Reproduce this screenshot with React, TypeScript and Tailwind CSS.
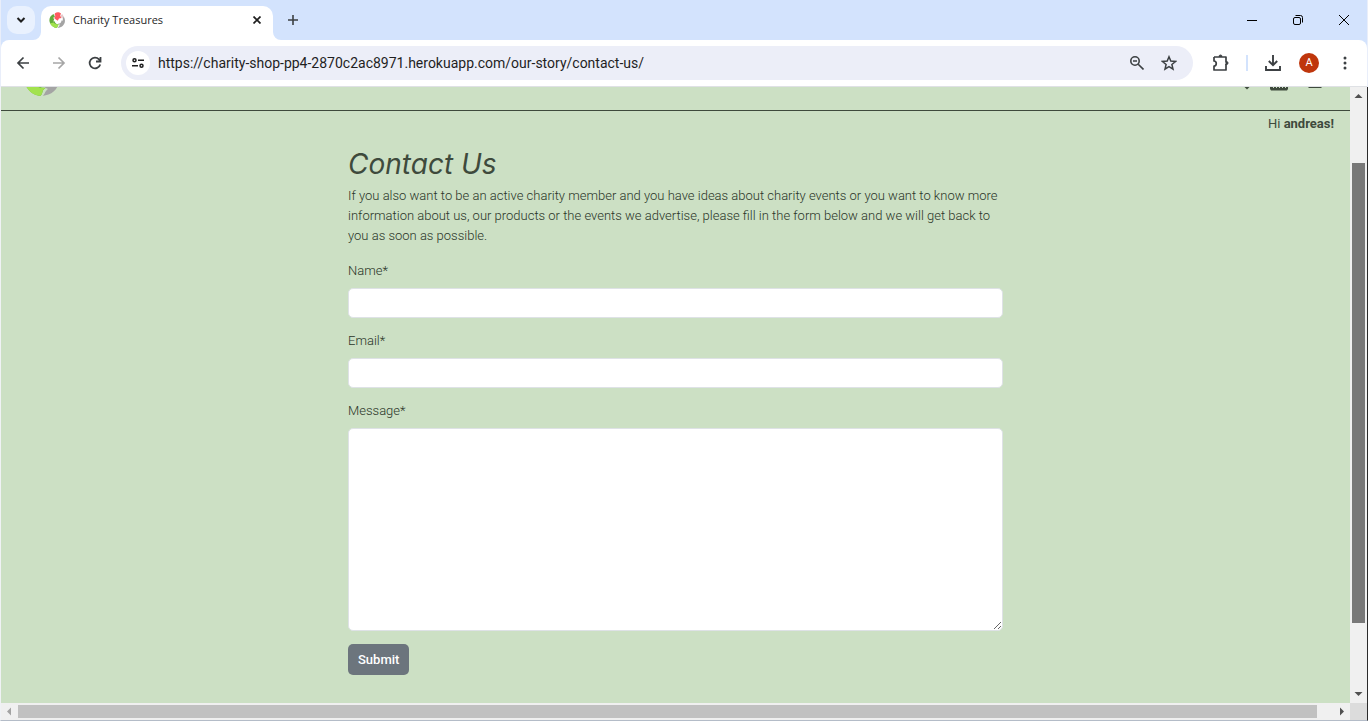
import React from "react";

const ico = "fill-none stroke-[#3c4043]";

function Logo({ className }: { className: string }) {
  return (
    <svg viewBox="0 0 40 40" className={className} aria-hidden="true">
      <path d="M11 5C3 9-1 18 2 26c3 8 10 13 17 14 4-3 1-6 6-9-7 0-10-3-11-8l-3 1 2-7-3-2 5-4z" fill="#63ab3b" />
      <path d="M3 28c3 7 9 11 16 12 4-3 1-6 6-9-8 0-12-2-13-5z" fill="#a2e24e" />
      <path d="M15 3c5-4 11-3 15 1l-2 5 3 6-6 1-3 6-5-3-4-4 3-5-2-4z" fill="#ff5a5f" />
      <path d="M36 10c6 9 5 19-2 25-3 3-8 4-12 5 3-3 2-5 6-8-2 0-5-2-5-4 5 2 8-2 8-7l3 1 1-6z" fill="#a4a4a4" />
      <path d="M33 5l3 5-2 7-3-2-2-6z" fill="#e6c9cb" />
    </svg>
  );
}

function TabStrip() {
  return (
    <div className="flex h-10 shrink-0 border-x border-[#e9eefa] bg-[#d3e3fd]">
      <button aria-label="Search tabs" className="mt-1.5 ml-1.5 flex h-7 w-7 items-center justify-center rounded-[10px] bg-[#e9f1fe]">
        <svg width="10" height="8" viewBox="0 0 10 8" className="fill-none stroke-[#1f1f1f] stroke-2"><path d="M1.500 2L5 5.500 8.500 2" /></svg>
      </button>
      <svg width="8" height="8" viewBox="0 0 8 8" className="-ml-0.5 self-end fill-white"><path d="M8 0v8H0a8 8 0 0 0 8-8z" /></svg>
      <div className="mt-1.5 flex w-58 items-center rounded-t-[10px] bg-white px-2 pb-1.5">
        <Logo className="h-4 w-4" />
        <span className="ml-2 flex-1 font-['Open_Sans',sans-serif] text-[11px] text-[#1f1f1f]">Charity Treasures</span>
        <button aria-label="Close tab" className="flex h-4 w-4 items-center justify-center">
          <svg width="8" height="8" viewBox="0 0 8 8" className="fill-none stroke-[#1f1f1f] stroke-[1.7]"><path d="M.5.5l7 7M7.500.5l-7 7" /></svg>
        </button>
      </div>
      <svg width="8" height="8" viewBox="0 0 8 8" className="self-end fill-white"><path d="M0 0v8h8a8 8 0 0 1-8-8z" /></svg>
      <button aria-label="New tab" className="flex h-10 w-6 items-center justify-center">
        <svg width="10" height="10" viewBox="0 0 10 10" className="fill-none stroke-[#3c4043] stroke-[1.600]"><path d="M5 0v10M0 5h10" /></svg>
      </button>
      <div className="ml-auto flex items-center">
        <button aria-label="Minimize" className="flex h-10 w-[46px] items-center justify-center">
          <svg width="10" height="10" viewBox="0 0 10 10" className="fill-none stroke-black"><path d="M0 5.500h10" /></svg>
        </button>
        <button aria-label="Restore" className="flex h-10 w-[46px] items-center justify-center">
          <svg width="10" height="10" viewBox="0 0 10 10" className="fill-none stroke-black"><rect x=".5" y="2.500" width="7" height="7" rx="1.500" /><path d="M2.500.5H7.500a2 2 0 0 1 2 2v5" /></svg>
        </button>
        <button aria-label="Close" className="flex h-10 w-[46px] items-center justify-center">
          <svg width="10" height="10" viewBox="0 0 10 10" className="fill-none stroke-black"><path d="M0 0l10 10M10 0L0 10" /></svg>
        </button>
      </div>
    </div>
  );
}

function Toolbar() {
  return (
    <div className="flex h-[47px] shrink-0 items-center border-x border-[#e9eefa] bg-[#d3e3fd]">
      <div className="flex h-full flex-1 items-center rounded-t-lg border-b border-[#dfe1e5] bg-white pr-3 pl-3">
        <button aria-label="Back" className="flex h-6 w-5 items-center justify-center">
          <svg width="14" height="14" viewBox="0 0 14 14" className={ico + " stroke-[1.700]"}><path d="M13 7H2M7.500 1.500L2 7l5.500 5.500" /></svg>
        </button>
        <button aria-label="Forward" className="ml-4 flex h-6 w-5 items-center justify-center">
          <svg width="14" height="14" viewBox="0 0 14 14" className="fill-none stroke-[#a6a6a6] stroke-[1.700]"><path d="M1 7h11M6.500 1.500L12 7l-5.500 5.500" /></svg>
        </button>
        <button aria-label="Reload" className="ml-4 flex h-6 w-5 items-center justify-center">
          <svg width="14" height="14" viewBox="0 0 14 14" className={ico + " stroke-[1.800]"}><path d="M12.200 8.500A5.400 5.400 0 1 1 11 3.300L12.300 5M12.500 1v4.500H8" /></svg>
        </button>
        <div className="ml-4 flex h-[34px] flex-1 items-center rounded-full bg-[#eceef8] px-[5px]">
          <button aria-label="Site information" className="flex h-6 w-6 items-center justify-center rounded-full bg-white">
            <svg width="12" height="10" viewBox="0 0 12 10" className="fill-none stroke-[#1f1f1f] stroke-[1.500]"><circle cx="2.500" cy="2.300" r="1.500" /><path d="M6 2.300h6M0 7.700h6" /><circle cx="9.500" cy="7.700" r="1.500" /></svg>
          </button>
          <input aria-label="Address" defaultValue="https://charity-shop-pp4-2870c2ac8971.herokuapp.com/our-story/contact-us/" className="ml-2 min-w-0 flex-1 bg-transparent font-[Roboto,sans-serif] text-[14px] text-[#1f1f1f] outline-none" />
          <button aria-label="Zoom" className="flex h-6 w-8 items-center justify-center">
            <svg width="14" height="14" viewBox="0 0 14 14" className={ico + " stroke-[1.600]"}><circle cx="5" cy="5" r="4.200" /><path d="M8.200 8.200l5.300 5.300M3 5h4" /></svg>
          </button>
          <button aria-label="Bookmark this page" className="mr-[3px] flex h-6 w-8 items-center justify-center">
            <svg width="16" height="16" viewBox="0 0 16 16" className={ico + " stroke-[1.500]"}><path d="M8 1.800l1.800 4.300 4.700.4-3.600 3 1.100 4.600L8 11.600l-4 2.500 1.100-4.600-3.600-3 4.700-.4z" /></svg>
          </button>
        </div>
        <button aria-label="Extensions" className="ml-4 flex h-6 w-6 items-center justify-center">
          <svg width="18" height="18" viewBox="0 0 18 18" className={ico + " stroke-[1.700]"}><path d="M2 3h12v5.200M14 10v6H2v-4c3 0 3-5 0-5V3" strokeLinejoin="round" /><path d="M7 2.500a1.500 1.500 0 0 1 3 0zM14.500 7.500a1.500 1.500 0 0 1 0 3zM14 8v3" className="fill-[#3c4043] stroke-[1]" /></svg>
        </button>
        <span className="mx-[13px] h-4 w-0.5 bg-[#d3e3fd]" />
        <button aria-label="Downloads" className="flex h-6 w-6 items-center justify-center">
          <svg width="16" height="16" viewBox="0 0 16 16" className={ico + " stroke-[1.900]"}><path d="M8 0v10M3.800 6L8 10.200 12.200 6M1 11v4h14v-4" /></svg>
        </button>
        <button aria-label="Profile" className="ml-3.5 flex h-5 w-5 items-center justify-center rounded-full bg-[#bf360c] font-[Roboto,sans-serif] text-[11px] leading-5 text-white">A</button>
        <button aria-label="Menu" className="ml-4 flex h-6 w-5 items-center justify-center">
          <svg width="4" height="14" viewBox="0 0 4 14" className="fill-[#3c4043]"><circle cx="2" cy="2" r="1.500" /><circle cx="2" cy="7" r="1.500" /><circle cx="2" cy="12" r="1.500" /></svg>
        </button>
      </div>
    </div>
  );
}

function SiteHeader() {
  return (
    <header className="flex h-6 items-start justify-between border-b border-[#3e4a3c] pr-7 pl-[22px]">
      <div className="flex h-[9px] items-end overflow-hidden">
        <Logo className="h-9 w-9 shrink-0" />
      </div>
      <nav className="flex items-start gap-5">
        <svg width="6" height="3" viewBox="0 0 6 3" className="fill-[#3e4a3c]"><path d="M.5 0h5L3 2.500z" /></svg>
        <svg width="18" height="4" viewBox="0 0 18 4" className="fill-[#3e4a3c]"><path d="M0 0h18v2l-1 1.500H1L0 2z" /><path d="M3 0h1v1H3zM6 0h1v1H6zM9 0h1v1H9zM12 0h1v1h-1zM15 0h1v1h-1z" className="fill-[#cce0c4]" /></svg>
        <svg width="14" height="2" viewBox="0 0 14 2" className="fill-[#3e4a3c]"><path d="M0 0h14l-1 1H1z" /></svg>
      </nav>
    </header>
  );
}

function ContactForm() {
  const label = "block text-[13px] leading-5 font-light text-[#2a3528]";
  const field = "mt-[7px] block w-full rounded-[5px] border border-[#dee2e6] bg-white px-2.5 text-[13px]";
  return (
    <main className="mx-auto w-full max-w-[655px] pt-4">
      <h1 className="font-[Inter,sans-serif] text-[28px] leading-7 font-normal italic">Contact Us</h1>
      <p className="mt-2 text-[13px] leading-5 font-light text-[#2a3528]">
        If you also want to be an active charity member and you have ideas about charity events or you want to know more information about us, our products or the events we advertise, please fill in the form below and we will get back to you as soon as possible.
      </p>
      <form className="mt-[15px]" onSubmit={(e) => e.preventDefault()}>
        <label htmlFor="name" className={label}>Name*</label>
        <input id="name" type="text" className={field + " h-[30px]"} />
        <label htmlFor="email" className={label + " mt-[13px]"}>Email*</label>
        <input id="email" type="email" className={field + " h-[30px]"} />
        <label htmlFor="message" className={label + " mt-[13px]"}>Message*</label>
        <textarea id="message" className={field + " h-[203px] resize-y"} />
        <button type="submit" className="mt-[13px] rounded-[5px] bg-[#6c757d] px-2.5 py-[5px] text-[13px] leading-[21px] font-medium text-white">Submit</button>
      </form>
    </main>
  );
}

export default function App() {
  return (
    <div className="flex h-screen flex-col overflow-hidden">
      <TabStrip />
      <Toolbar />
      <div className="flex min-h-0 flex-1 border-r border-l border-r-[#2b2b2b] border-l-[#f0f2f5]">
        <div className="min-w-0 flex-1 overflow-hidden bg-[#cce0c4] font-[Roboto,sans-serif] text-[#3e4a3c]">
          <SiteHeader />
          <p className="pt-[3px] pr-4 text-right text-[13px] leading-5">Hi <strong className="font-bold">andreas!</strong></p>
          <ContactForm />
        </div>
        <div className="flex w-[17px] shrink-0 flex-col items-center bg-[#f0f0f0]">
          <svg width="17" height="17" viewBox="0 0 17 17" className="fill-[#505050]"><path d="M4.500 11L8.500 7l4 4z" /></svg>
          <div className="mt-[59px] h-[460px] w-[13px] bg-[#787878]" />
          <svg width="17" height="17" viewBox="0 0 17 17" className="mt-auto fill-[#505050]"><path d="M4.500 6L8.500 10l4-4z" /></svg>
        </div>
      </div>
      <div className="flex h-[18px] shrink-0 items-center border-r border-b border-l border-r-[#2b2b2b] border-b-[#b4bcc8] border-l-[#f0f2f5] bg-[#f0f0f0]">
        <svg width="17" height="17" viewBox="0 0 17 17" className="shrink-0 fill-[#a3a3a3]"><path d="M10 4.500L6 8.500l4 4z" /></svg>
        <div className="mr-4 h-[13px] flex-1 bg-[#c1c1c1]" />
        <svg width="17" height="17" viewBox="0 0 17 17" className="shrink-0 fill-[#505050]"><path d="M7 4.500l4 4-4 4z" /></svg>
        <div className="h-full w-[17px] shrink-0 bg-[#dcdcdc]" />
      </div>
    </div>
  );
}
